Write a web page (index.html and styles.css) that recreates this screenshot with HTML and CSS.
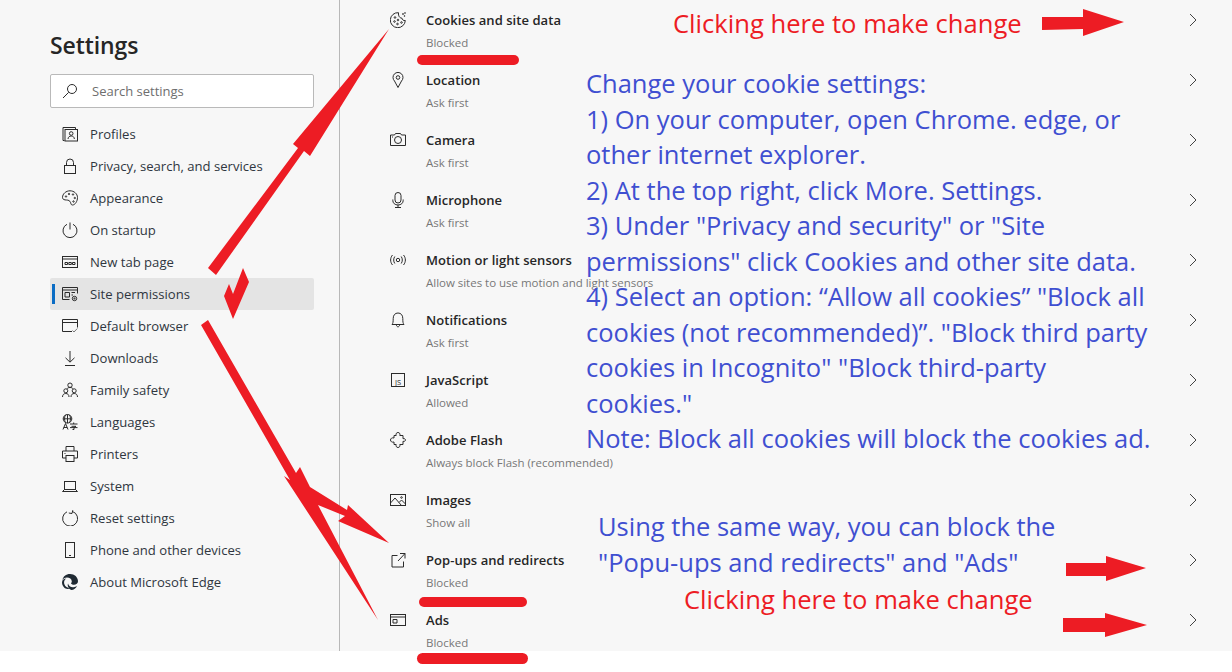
FILE: index.html
```html
<!DOCTYPE html>
<html lang="en">
<head>
    <meta charset="UTF-8">
    <title>Settings - Site permissions</title>
    <link rel="stylesheet" href="styles.css">
</head>
<body>
    <div class="app">
        <aside class="sidebar">
            <h1 class="sidebar-title">Settings</h1>
            <div class="search-box">
                <svg class="icon" viewBox="0 0 16 16"><circle cx="10" cy="6" r="4.5"/><path d="M6.7 9.3L1 15"/></svg>
                <span>Search settings</span>
            </div>
            <nav class="nav">
                <div class="nav-item">
                    <svg class="icon" viewBox="0 0 16 16"><path d="M2.5 14.5H1V1.5h12.5V3"/><rect x="3" y="3.5" width="12.5" height="11.5"/><circle cx="9.2" cy="7.5" r="1.8"/><path d="M6 13c.3-2.2 1.500-3 3.200-3s2.900.8 3.200 3"/></svg>
                    <span>Profiles</span>
                </div>
                <div class="nav-item">
                    <svg class="icon" viewBox="0 0 16 16"><rect x="2.500" y="7.500" width="11" height="8"/><path d="M4.500 7.500V4.500a3.500 3.500 0 0 1 7 0v3"/></svg>
                    <span>Privacy, search, and services</span>
                </div>
                <div class="nav-item">
                    <svg class="icon" viewBox="0 0 16 16"><path d="M8 .8c4 0 7.500 3 7.500 6.700 0 3.800-2.500 7.500-5 7.500-1.700 0-1.500-1.500-2-2.700C7.800 10.800 6.500 10 4.500 10 2.500 10 .5 9.500.5 7.500.5 3.800 4 .8 8 .8z"/><circle cx="4" cy="6.500" r=".7"/><circle cx="7" cy="4" r=".7"/><circle cx="11" cy="4.500" r=".7"/><circle cx="12.800" cy="8" r=".7"/><circle cx="11.500" cy="11.500" r=".7"/></svg>
                    <span>Appearance</span>
                </div>
                <div class="nav-item">
                    <svg class="icon" viewBox="0 0 16 16"><path d="M8 .5v7"/><path d="M5 2.300a7 7 0 1 0 6 0"/></svg>
                    <span>On startup</span>
                </div>
                <div class="nav-item">
                    <svg class="icon" viewBox="0 0 16 16"><rect x=".5" y="2.500" width="15" height="11"/><path d="M.5 5h15M3 8.500h2.500v2H3zM6.800 8.500h2.500v2H6.800zM10.500 8.500H13v2h-2.500z"/></svg>
                    <span>New tab page</span>
                </div>
                <div class="nav-item active">
                    <svg class="icon" viewBox="0 0 16 16"><path d="M7.500 13.500H.5v-12h15v6"/><path d="M.5 4h15M3 6.500h4.500v4.500H3zM9.500 6.500h3.500M9.500 9H11"/><circle cx="12.500" cy="12.500" r="2.200"/><circle cx="12.500" cy="12.500" r=".6"/></svg>
                    <span>Site permissions</span>
                </div>
                <div class="nav-item">
                    <svg class="icon" viewBox="0 0 16 16"><path d="M10 13.500H.5v-12h15v8"/><path d="M.5 4.500h15"/><path class="thin" d="M10.500 12.500l1.500 1.500 3.300-3.500"/></svg>
                    <span>Default browser</span>
                </div>
                <div class="nav-item">
                    <svg class="icon" viewBox="0 0 16 16"><path d="M8 1v11M3.500 7.800L8 12.200l4.500-4.400M3 15.500h10"/></svg>
                    <span>Downloads</span>
                </div>
                <div class="nav-item">
                    <svg class="icon" viewBox="0 0 16 16"><circle cx="8" cy="3.200" r="2.200"/><circle cx="3.800" cy="8.800" r="2"/><circle cx="12.200" cy="8.800" r="2"/><path d="M.5 15c0-2.200 1.300-3.500 3.300-3.500S7 12.800 7 15M9 15c0-2.200 1.200-3.500 3.200-3.500s3.300 1.300 3.300 3.500M5 6.800C5.500 6 6.500 5.500 8 5.500s2.500.5 3 1.300"/></svg>
                    <span>Family safety</span>
                </div>
                <div class="nav-item">
                    <svg class="icon" viewBox="0 0 16 16"><circle cx="5.500" cy="4.800" r="4.300"/><path d="M1.200 4.800h8.600M5.500.5v8.600M3.500 1c-1.300 2-1.300 5.500 0 7.700M7.500 1c1.300 2 1.300 5.500 0 7.700"/><path d="M1 15.500l2.500-6 2.500 6M1.800 13.500h3.400M8 10h7.500M11.700 8.500V10M9.500 12.300h4.500l-2 1.300v1.900h-1.500M8 13.600h7.500"/></svg>
                    <span>Languages</span>
                </div>
                <div class="nav-item">
                    <svg class="icon" viewBox="0 0 16 16"><path d="M4 5V.5h8V5"/><path d="M4 12H.5V5h15v7H12"/><rect x="4" y="9.500" width="8" height="6"/><path d="M2.500 7.500h1"/></svg>
                    <span>Printers</span>
                </div>
                <div class="nav-item">
                    <svg class="icon" viewBox="0 0 16 16"><rect x="2.500" y="3.500" width="11" height="8"/><path d="M.5 13.500h15M2.500 11.500l-2 2M13.500 11.500l2 2"/></svg>
                    <span>System</span>
                </div>
                <div class="nav-item">
                    <svg class="icon" viewBox="0 0 16 16"><path d="M5 1.800A7.500 7.500 0 1 0 10.500 1.500"/><path d="M10.800 .2L10 3.500 6.800 3"/></svg>
                    <span>Reset settings</span>
                </div>
                <div class="nav-item">
                    <svg class="icon" viewBox="0 0 16 16"><rect x="3.500" y=".5" width="9" height="15"/><path d="M7 13.500h2"/></svg>
                    <span>Phone and other devices</span>
                </div>
                <div class="nav-item">
                    <svg class="icon edge-icon" viewBox="0 0 16 16"><path d="M8 0c4.500 0 8 3.200 8 7.200 0 2.200-1.800 3.600-4 3.600-1.500 0-3-.6-3-1.500 0-.5.800-.6.800-1.900C9.800 5 7.500 3.500 5 3.500 2.800 3.500 1.300 4.600.4 6 1 2.600 4 0 8 0z"/><path d="M0 8.200C.2 5.800 2.200 4.500 4.300 4.500c-2 1.200-2.800 3.600-1.800 6 .8 2 2.800 3.600 5.500 3.700-3.300 2.300-8-1-8-6z"/><path d="M6 9.500c.5 2.600 3 4 5.500 3.700 1.300-.1 2.800-.7 3.500-1.500-.8 2.500-3.200 4.300-5.800 4.300C7 15 5 12 6 9.500z"/></svg>
                    <span>About Microsoft Edge</span>
                </div>
            </nav>
        </aside>

        <main class="permissions">
            <div class="perm-row">
                <svg class="icon" viewBox="0 0 16 16"><path d="M8.500.7A7.500 7.500 0 1 0 15.300 8.500C13.500 8.800 12 7.800 11.800 6 10 6.200 8.200 4.500 8.500.7z"/><circle cx="5" cy="5.500" r=".8"/><circle cx="4.500" cy="9.500" r=".8"/><circle cx="8" cy="8" r=".8"/><circle cx="7.500" cy="12" r=".8"/><circle cx="11.500" cy="10.500" r=".8"/><circle cx="13" cy="2" r=".5"/><circle cx="15" cy="1" r=".4"/><circle cx="14.500" cy="4" r=".4"/></svg>
                <div class="perm-text"><div class="perm-name">Cookies and site data</div><div class="perm-status">Blocked</div></div>
                <svg class="chevron" viewBox="0 0 8 14"><path d="M1 1l6 6-6 6"/></svg>
            </div>
            <div class="perm-row">
                <svg class="icon" viewBox="0 0 16 16"><path d="M8 15.500L4.500 9A5 5 0 1 1 11.500 9z"/><circle cx="8" cy="5.500" r="1.800"/></svg>
                <div class="perm-text"><div class="perm-name">Location</div><div class="perm-status">Ask first</div></div>
                <svg class="chevron" viewBox="0 0 8 14"><path d="M1 1l6 6-6 6"/></svg>
            </div>
            <div class="perm-row">
                <svg class="icon" viewBox="0 0 16 16"><path d="M.5 3h4l1-1.500h5L11.500 3h4v10.500H.5z"/><circle cx="8" cy="8" r="3.500"/><path d="M2 5h1"/></svg>
                <div class="perm-text"><div class="perm-name">Camera</div><div class="perm-status">Ask first</div></div>
                <svg class="chevron" viewBox="0 0 8 14"><path d="M1 1l6 6-6 6"/></svg>
            </div>
            <div class="perm-row">
                <svg class="icon" viewBox="0 0 16 16"><rect x="5" y=".5" width="6" height="10.500" rx="3"/><path d="M2.800 7.500v1c0 2.500 2 4.500 5.200 4.500s5.200-2 5.200-4.500v-1M8 13v2.500M5 15.500h6"/></svg>
                <div class="perm-text"><div class="perm-name">Microphone</div><div class="perm-status">Ask first</div></div>
                <svg class="chevron" viewBox="0 0 8 14"><path d="M1 1l6 6-6 6"/></svg>
            </div>
            <div class="perm-row">
                <svg class="icon" viewBox="0 0 16 16"><circle cx="8" cy="8" r="1.700"/><path d="M4.800 4.500c-1.500 2-1.500 5 0 7M11.200 4.500c1.500 2 1.500 5 0 7M2.500 3c-2.500 3-2.500 7 0 10M13.500 3c2.500 3 2.500 7 0 10"/></svg>
                <div class="perm-text"><div class="perm-name">Motion or light sensors</div><div class="perm-status">Allow sites to use motion and light sensors</div></div>
                <svg class="chevron" viewBox="0 0 8 14"><path d="M1 1l6 6-6 6"/></svg>
            </div>
            <div class="perm-row">
                <svg class="icon" viewBox="0 0 16 16"><path d="M2 12.500c1-1.200 1.200-2.500 1.200-6C3.200 3.200 5 1 8 1s4.800 2.200 4.800 5.500c0 3.500.2 4.800 1.200 6z"/><path d="M6.300 12.500c0 1.200.7 2.300 1.700 2.300s1.700-1.100 1.700-2.300"/></svg>
                <div class="perm-text"><div class="perm-name">Notifications</div><div class="perm-status">Ask first</div></div>
                <svg class="chevron" viewBox="0 0 8 14"><path d="M1 1l6 6-6 6"/></svg>
            </div>
            <div class="perm-row">
                <svg class="icon" viewBox="0 0 16 16"><rect x="1.500" y="1.500" width="13" height="13"/><text class="js-label" x="8" y="12.800">JS</text></svg>
                <div class="perm-text"><div class="perm-name">JavaScript</div><div class="perm-status">Allowed</div></div>
                <svg class="chevron" viewBox="0 0 8 14"><path d="M1 1l6 6-6 6"/></svg>
            </div>
            <div class="perm-row">
                <svg class="icon" viewBox="0 0 16 16"><path d="M4 3.500h2.200c-.6-1.800.4-3 1.800-3s2.400 1.200 1.800 3H13v3.200c1.500-.4 2.500.4 2.500 1.300S14.500 9.700 13 9.300v3.200H9.800c.6 1.800-.4 3-1.800 3s-2.400-1.200-1.800-3H4V10c-2 .6-3.500-.4-3.500-2S2 5.400 4 6z"/></svg>
                <div class="perm-text"><div class="perm-name">Adobe Flash</div><div class="perm-status">Always block Flash (recommended)</div></div>
                <svg class="chevron" viewBox="0 0 8 14"><path d="M1 1l6 6-6 6"/></svg>
            </div>
            <div class="perm-row">
                <svg class="icon" viewBox="0 0 16 16"><rect x=".5" y="2.500" width="15" height="11"/><path d="M.5 11L5 6l6.500 7.500M9 10.500l2.500-2.500 4 4"/><circle cx="11.500" cy="5.500" r=".8"/></svg>
                <div class="perm-text"><div class="perm-name">Images</div><div class="perm-status">Show all</div></div>
                <svg class="chevron" viewBox="0 0 8 14"><path d="M1 1l6 6-6 6"/></svg>
            </div>
            <div class="perm-row">
                <svg class="icon" viewBox="0 0 16 16"><path d="M7.500 3.500h-5.500v11.500h11.500v-5.500M8 9L15 1.500M10 1.500h5v5"/></svg>
                <div class="perm-text"><div class="perm-name">Pop-ups and redirects</div><div class="perm-status">Blocked</div></div>
                <svg class="chevron" viewBox="0 0 8 14"><path d="M1 1l6 6-6 6"/></svg>
            </div>
            <div class="perm-row">
                <svg class="icon" viewBox="0 0 16 16"><rect x=".5" y="2.500" width="15" height="11"/><path d="M.5 5h15M3 7.500h4v3.500H3z"/></svg>
                <div class="perm-text"><div class="perm-name">Ads</div><div class="perm-status">Blocked</div></div>
                <svg class="chevron" viewBox="0 0 8 14"><path d="M1 1l6 6-6 6"/></svg>
            </div>
        </main>
    </div>

    <!-- red marks drawn over the screenshot -->
    <svg class="marks" viewBox="0 0 1232 672">
        <polygon points="208,268 298,148 293,144 389,29 310,156 304,151 216,275"/>
        <polygon points="243,268 249,282 233,319 224,296 229,284 233,294"/>
        <polygon points="201,325 208,320 296,473 300,467 310,487 347,510 348,505 389,543 338,521 345,516 318,505 378,620 284,476 290,480"/>
        <polygon points="1042,17 1083,17 1083,9 1124,22 1083,36 1083,29 1042,30"/>
        <polygon points="1066,563 1106,563 1106,556 1146,568 1106,581 1106,576 1066,576"/>
        <polygon points="1063,618 1105,618 1105,613 1147,625 1105,637 1105,632 1063,632"/>
        <rect x="417" y="55" width="102" height="10" rx="5"/>
        <rect x="419" y="597" width="108" height="10" rx="5"/>
        <rect x="417" y="653" width="111" height="11" rx="5.500"/>
    </svg>

    <div class="note note-top">Clicking here to make change</div>
    <div class="note steps">Change your cookie settings:<br>
        1) On your computer, open Chrome. edge, or<br>
        other internet explorer.<br>
        2) At the top right, click More. Settings.<br>
        3) Under "Privacy and security" or "Site<br>
        permissions" click Cookies and other site data.<br>
        4) Select an option: “Allow all cookies” "Block all<br>
        cookies (not recommended)”. "Block third party<br>
        cookies in Incognito" "Block third-party<br>
        cookies."<br>
        Note: Block all cookies will block the cookies ad.</div>
    <div class="note same-way">Using the same way, you can block the<br>
        "Popu-ups and redirects" and "Ads"</div>
    <div class="note note-bottom">Clicking here to make change</div>
</body>
</html>
```

FILE: styles.css
```css
html, body {
    margin: 0;
    height: 100%;
    background-color: #fff;
    overflow: hidden;
}

body {
    position: relative;
    font-family: 'Open Sans', 'Noto Sans', sans-serif;
    color: #262626;
}

.app {
    display: flex;
    height: 651px;
    overflow: hidden;
    background-color: #f7f7f7;
}

.icon {
    width: 16px;
    height: 16px;
    flex: none;
    fill: none;
    stroke: #2b2b2b;
    stroke-width: 1;
}

/* left column */
.sidebar {
    width: 340px;
    box-sizing: border-box;
    flex: none;
    padding: 29px 25px 0 50px;
    border-right: 1px solid #b8b8b8;
}

.sidebar-title {
    margin: 0 0 13px;
    font-size: 23px;
    line-height: 32px;
    font-weight: 600;
    letter-spacing: -0.1px;
}

.search-box {
    display: flex;
    align-items: center;
    gap: 14px;
    height: 34px;
    box-sizing: border-box;
    margin-bottom: 10px;
    padding-left: 11px;
    background-color: #fff;
    border: 1px solid #b9b9b9;
    border-radius: 2px;
    font-size: 13px;
    color: #6e6e6e;
}

.nav-item {
    position: relative;
    display: flex;
    align-items: center;
    gap: 12px;
    height: 32px;
    padding-left: 12px;
    font-size: 13.100px;
    color: #2f3640;
}

.nav-item.active {
    background-color: #e4e4e4;
    border-radius: 2px;
}

.nav-item.active::before {
    content: "";
    position: absolute;
    left: 2px;
    top: 6px;
    width: 3px;
    height: 20px;
    background-color: #0a6cc4;
}

.thin {
    stroke: #777;
}

.edge-icon {
    fill: #1f2a33;
    stroke: none;
}

/* right column */
.permissions {
    flex: 1;
    padding-left: 50px;
}

.perm-row {
    display: flex;
    align-items: flex-start;
    height: 60px;
    padding-right: 35px;
}

.perm-row .icon {
    margin-top: 12px;
}

.perm-text {
    flex: 1;
    margin-left: 20px;
    padding-top: 10px;
}

.perm-name {
    font-size: 13px;
    line-height: 20px;
    font-weight: 600;
    letter-spacing: 0.05px;
}

.perm-status {
    margin-top: 3px;
    font-size: 11.500px;
    line-height: 20px;
    letter-spacing: -0.02px;
    color: #777;
}

.chevron {
    width: 8px;
    height: 14px;
    margin-top: 13px;
    fill: none;
    stroke: #444;
    stroke-width: 1;
}

.js-label {
    font-size: 7.500px;
    text-anchor: middle;
    fill: #2b2b2b;
    stroke: none;
}

/* annotations over the screenshot */
.marks {
    position: absolute;
    left: 0;
    top: 0;
    width: 1232px;
    height: 672px;
    fill: #ed1c24;
}

.note {
    position: absolute;
    white-space: nowrap;
    font-size: 25.500px;
    line-height: 35.500px;
    color: #3f4fd1;
}

.note-top, .note-bottom {
    font-size: 25.600px;
    color: #ed1c24;
}

.note-top {
    left: 673px;
    top: 6px;
}

.steps {
    left: 586px;
    top: 66px;
}

.same-way {
    left: 598px;
    top: 509px;
}

.note-bottom {
    left: 684px;
    top: 582px;
}
```
